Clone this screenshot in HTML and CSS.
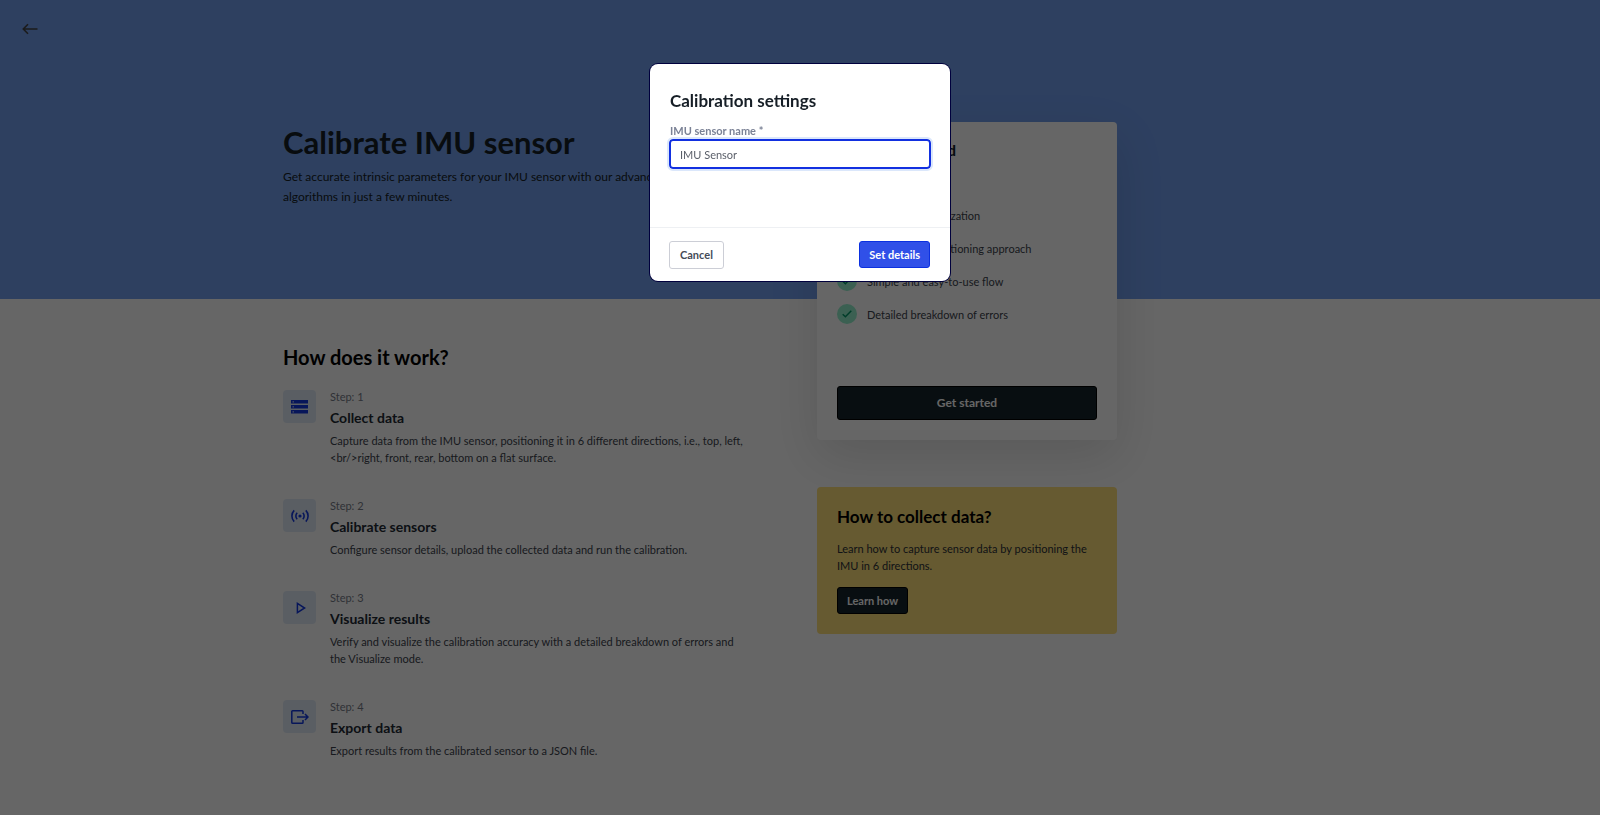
FILE: index.html
```html
<!DOCTYPE html>
<html lang="en">
<head>
<meta charset="utf-8">
<title>Calibrate IMU sensor</title>
<link rel="stylesheet" href="styles.css">
</head>
<body>
<div class="page">
  <header class="hero">
    <button class="back" type="button" aria-label="Back">
      <svg width="16" height="12" viewBox="0 0 16 12" fill="none" stroke="currentColor" stroke-width="1.6"><path d="M15.5 6H1.5M6 1.2L1.3 6L6 10.8"/></svg>
    </button>
  </header>
  <div class="container">
    <main class="main">
      <section class="intro">
        <h1 class="title">Calibrate IMU sensor</h1>
        <p class="lead">Get accurate intrinsic parameters for your IMU sensor with our advanced algorithms in just a few minutes.</p>
      </section>
      <section class="how">
        <h2 class="heading">How does it work?</h2>
        <ol class="steps">
          <li class="step">
            <span class="step-icon"><svg width="18" height="14" viewBox="0 0 18 14"><path fill="currentColor" fill-rule="evenodd" d="M0 0h17v3.6H0zM1.6 1.2v1.2h1.2V1.2zM0 5h17v3.6H0zM1.6 6.2v1.2h1.2V6.2zM0 10h17v3.6H0zM1.6 11.2v1.2h1.2v-1.2z"/></svg></span>
            <div class="step-body">
              <span class="step-label">Step: 1</span>
              <h3 class="step-title">Collect data</h3>
              <p class="step-text">Capture data from the IMU sensor, positioning it in 6 different directions, i.e., top, left, &lt;br/&gt;right, front, rear, bottom on a flat surface.</p>
            </div>
          </li>
          <li class="step">
            <span class="step-icon"><svg width="18" height="14" viewBox="0 0 18 14" fill="none" stroke="currentColor" stroke-width="1.6"><circle cx="9" cy="7" r="1.6" fill="currentColor" stroke="none"/><path d="M6.2 3.8a4.5 4.5 0 0 0 0 6.4M11.8 3.8a4.5 4.5 0 0 1 0 6.4M3.2 1.4a8 8 0 0 0 0 11.2M14.8 1.4a8 8 0 0 1 0 11.2"/></svg></span>
            <div class="step-body">
              <span class="step-label">Step: 2</span>
              <h3 class="step-title">Calibrate sensors</h3>
              <p class="step-text">Configure sensor details, upload the collected data and run the calibration.</p>
            </div>
          </li>
          <li class="step">
            <span class="step-icon"><svg width="18" height="14" viewBox="0 0 18 14" fill="none" stroke="currentColor" stroke-width="1.5"><path d="M6.4 2.4v9.2L13.6 7z"/></svg></span>
            <div class="step-body">
              <span class="step-label">Step: 3</span>
              <h3 class="step-title">Visualize results</h3>
              <p class="step-text">Verify and visualize the calibration accuracy with a detailed breakdown of errors and the Visualize mode.</p>
            </div>
          </li>
          <li class="step">
            <span class="step-icon"><svg width="18" height="14" viewBox="0 0 18 14" fill="none" stroke="currentColor" stroke-width="1.5"><path d="M12 4V1.6a.8.8 0 0 0-.8-.8H1.6a.8.8 0 0 0-.8.8v10.8c0 .4.4.8.8.8h9.6c.4 0 .8-.4.8-.8V10M6 7h11M14 4l3 3-3 3"/></svg></span>
            <div class="step-body">
              <span class="step-label">Step: 4</span>
              <h3 class="step-title">Export data</h3>
              <p class="step-text">Export results from the calibrated sensor to a JSON file.</p>
            </div>
          </li>
        </ol>
      </section>
    </main>
    <aside class="side">
      <section class="card">
        <h2 class="card-title">What is included</h2>
        <ul class="features">
          <li class="feature"><span class="check"><svg width="10" height="8" viewBox="0 0 10 8" fill="none" stroke="currentColor" stroke-width="1.5"><path d="M.7 4.2l2.7 2.6L9.3.8"/></svg></span>Automatic optimization</li>
          <li class="feature"><span class="check"><svg width="10" height="8" viewBox="0 0 10 8" fill="none" stroke="currentColor" stroke-width="1.5"><path d="M.7 4.2l2.7 2.6L9.3.8"/></svg></span>Six-direction positioning approach</li>
          <li class="feature"><span class="check"><svg width="10" height="8" viewBox="0 0 10 8" fill="none" stroke="currentColor" stroke-width="1.5"><path d="M.7 4.2l2.7 2.6L9.3.8"/></svg></span>Simple and easy-to-use flow</li>
          <li class="feature"><span class="check"><svg width="10" height="8" viewBox="0 0 10 8" fill="none" stroke="currentColor" stroke-width="1.5"><path d="M.7 4.2l2.7 2.6L9.3.8"/></svg></span>Detailed breakdown of errors</li>
        </ul>
        <button class="btn btn-dark btn-wide" type="button">Get started</button>
      </section>
      <section class="help">
        <h2 class="help-title">How to collect data?</h2>
        <p class="help-text">Learn how to capture sensor data by positioning the IMU in 6 directions.</p>
        <button class="btn btn-dark" type="button">Learn how</button>
      </section>
    </aside>
  </div>
</div>
<div class="backdrop">
  <form class="modal" role="dialog" aria-labelledby="modal-title">
    <div class="modal-body">
      <h2 class="modal-title" id="modal-title">Calibration settings</h2>
      <label class="label" for="sensor-name">IMU sensor name *</label>
      <input class="input" id="sensor-name" type="text" value="IMU Sensor">
    </div>
    <div class="modal-footer">
      <button class="btn btn-plain" type="button">Cancel</button>
      <button class="btn btn-primary" type="button">Set details</button>
    </div>
  </form>
</div>
</body>
</html>
```
FILE: styles.css
```css
* { box-sizing: border-box; }
body { margin: 0; background: #fff; color: #3c434d; font: 11px/17px Lato, "Noto Sans", sans-serif; }
h1, h2, h3, p, ol, ul { margin: 0; padding: 0; }
ol, ul { list-style: none; }
button, input { font: inherit; }
svg { display: block; }

.page { display: grid; min-height: 100vh; grid-template-columns: minmax(0, 1fr); align-items: start; }
.hero, .container { grid-area: 1 / 1; }
.hero { height: 299px; padding: 16px; background: #73a0f0; }
.back { display: grid; place-items: center; width: 28px; height: 26px; padding: 0; border: 0; background: none; color: #444; }
.container { display: flex; justify-content: space-between; width: 834px; max-width: 100%; margin: 0 auto; margin-left: calc(50% - 517px); padding: 122px 0 50px; }
.main { width: 460px; }
.intro { height: 216px; }
.title { font-size: 31px; line-height: 40px; font-weight: 700; color: #161e26; }
.lead { max-width: 410px; margin-top: 5px; font-size: 12px; line-height: 20px; color: #161e26; }
.heading { font-size: 20px; line-height: 38px; font-weight: 700; color: #000; }
.steps { display: grid; gap: 31px; margin-top: 12px; }
.step { display: flex; gap: 14px; }
.step-icon { display: grid; place-items: center; flex: none; width: 33px; height: 33px; margin-top: 2px; border-radius: 4px; background: #e2ebf8; color: #1238e0; }
.step-label { display: block; line-height: 17px; color: #767c88; }
.step-title { font-size: 14px; line-height: 25px; font-weight: 700; color: #222a34; }
.step-text { margin-top: 2px; color: #3c434d; }

.side { width: 300px; }
.card { display: flex; flex-direction: column; height: 318px; padding: 16px 20px 20px; border-radius: 4px; background: #fff; box-shadow: 0 17px 50px rgba(0, 0, 0, .12); }
.card-title { font-size: 16px; line-height: 24px; color: #161e26; }
.features { display: grid; gap: 13px; margin-top: 43px; }
.feature { display: flex; align-items: center; gap: 10px; height: 20px; }
.check { display: grid; place-items: center; width: 20px; height: 20px; border-radius: 50%; background: #94f0cc; color: #009868; }
.help { margin-top: 47px; padding: 18px 20px 20px; border-radius: 4px; background: #ffe07a; }
.help-title { font-size: 17px; line-height: 24px; font-weight: 700; color: #000; }
.help-text { margin: 11px 0 13px; color: #2c3038; }

.btn { height: 27px; padding: 0 9px; border: 1px solid; border-radius: 3px; font-size: 11px; font-weight: 700; line-height: 16px; }
.btn-dark { border-color: #000; background: #16242b; color: #fff; }
.btn-wide { height: 34px; margin-top: auto; font-size: 12px; }
.btn-plain { height: 28px; padding: 0 10px; border-color: #ccced6; background: #fff; color: #454b58; }
.btn-primary { border-color: #0b30e0; background: #3050e8; color: #fff; }

.backdrop { position: fixed; inset: 0; padding-top: 64px; background: rgba(0, 0, 0, .6); }
.modal { width: 300px; margin: 0 auto; border-radius: 8px; background: #fff; box-shadow: 0 0 0 1px #00003d; }
.modal-body { height: 163px; padding: 25px 19px 0; }
.modal-title { margin-left: 1px; font-size: 17px; line-height: 24px; font-weight: 700; color: #161e26; }
.label { display: block; margin: 9px 0 0 1px; line-height: 17px; font-weight: 700; color: #7b8296; }
.input { width: 100%; height: 30px; padding: 0 9px; border: 2px solid #1230e0; border-radius: 4px; outline: 2px solid #dbe7fb; color: #5a5f69; font-size: 11px; }
.modal-footer { display: flex; align-items: center; justify-content: space-between; height: 54px; padding: 0 20px 0 19px; border-top: 1px solid #eef0f3; }
```
